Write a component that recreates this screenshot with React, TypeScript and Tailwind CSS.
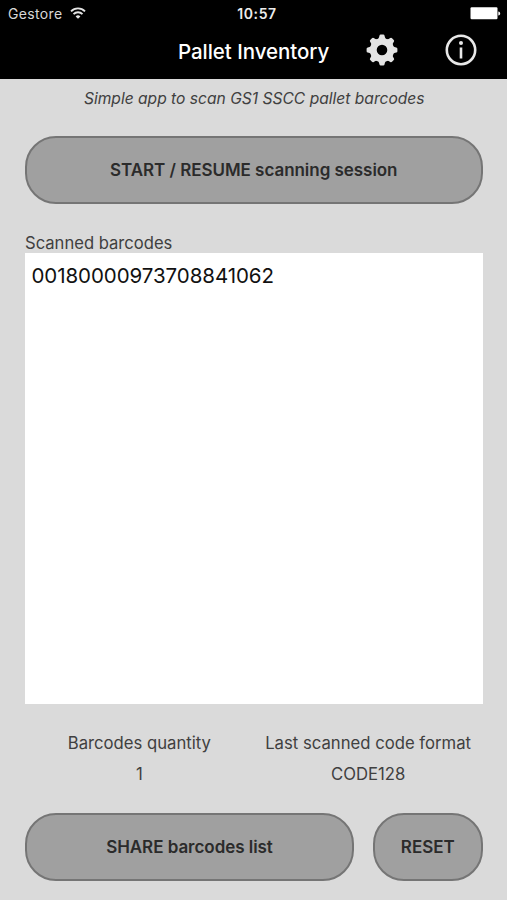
import { useState } from "react";
import type { ReactNode } from "react";

const GEAR_TEETH = [0, 45, 90, 135, 180, 225, 270, 315];

function WifiIcon() {
  return (
    <svg width="16" height="12" viewBox="0 0 16 12" fill="none" stroke="#e4e4e4" strokeWidth="1.9">
      <path d="M1 4.3a9.9 9.9 0 0 1 14 0" />
      <path d="M3.5 7.1a6.4 6.4 0 0 1 9 0" />
      <path d="M8 11.8 5.6 9.4a3.5 3.5 0 0 1 4.8 0Z" fill="#e4e4e4" stroke="none" />
    </svg>
  );
}

function BatteryIcon() {
  return (
    <svg width="31" height="13" viewBox="0 0 31 13" fill="#fff">
      <rect x="0.5" y="0.3" width="27" height="12" rx="1.2" />
      <path d="M28.3 4.4c1.4.4 1.9 1.2 1.9 2.1s-.5 1.7-1.9 2.1Z" />
    </svg>
  );
}

function GearIcon() {
  return (
    <svg width="32" height="32" viewBox="-16 -16 32 32">
      <circle r="8.7" fill="none" stroke="#e4e4e4" strokeWidth="6.8" />
      {GEAR_TEETH.map((angle) => (
        <path
          key={angle}
          d="M-4.3-10.500C-3-12-2.900-13-2.600-14.200Q-2.300-15.400-1.200-15.400H1.200Q2.300-15.400 2.600-14.200C2.900-13 3-12 4.300-10.500Z"
          transform={`rotate(${angle})`}
          fill="#e4e4e4"
        />
      ))}
    </svg>
  );
}

function InfoIcon() {
  return (
    <svg width="32" height="32" viewBox="-16 -16 32 32" fill="none" stroke="#e8e8e8">
      <circle r="14.2" strokeWidth="2.6" />
      <circle cy="-7.1" r="2" fill="#e8e8e8" stroke="none" />
      <path d="M0-2.5V8.500" strokeWidth="2.6" />
    </svg>
  );
}

function PillButton({ className, onClick, children }: { className: string; onClick?: () => void; children: ReactNode }) {
  return (
    <button
      onClick={onClick}
      className={`h-[68px] rounded-[31px] border-2 border-[#757575] bg-[#a0a0a0] pt-[2px] text-[17px] font-semibold tracking-[-0.04px] text-[#2b2b2b] ${className}`}
    >
      {children}
    </button>
  );
}

function Stat({ label, value }: { label: string; value: string | number }) {
  return (
    <div className="flex-1 text-center text-[16.7px] leading-[30px] whitespace-nowrap">
      <p>{label}</p>
      <p className="pt-px">{value}</p>
    </div>
  );
}

export default function App() {
  const [barcodes, setBarcodes] = useState(["00180000973708841062"]);

  return (
    <div className="flex h-[900px] w-[507px] flex-col overflow-hidden bg-[#dadada] font-['Inter',sans-serif] text-[#404040]">
      <header className="h-[79px] bg-black text-white">
        {/* Status bar */}
        <div className="grid h-7 grid-cols-3 items-center pr-1.5 pl-2">
          <div className="-mt-0.5 flex items-center gap-[7px] text-[14px] tracking-[0.35px] text-[#d8d8d8]">
            <span>Gestore</span>
            <span className="-mt-px">
              <WifiIcon />
            </span>
          </div>
          <span className="-mt-0.5 pl-[5px] text-center text-[14px] font-semibold tracking-[0.6px] text-[#ececec]">10:57</span>
          <div className="-mt-px flex justify-end">
            <BatteryIcon />
          </div>
        </div>

        {/* Title bar */}
        <div className="flex h-11 items-center pl-[178px]">
          <h1 className="w-[188px] pt-[5px] text-[20.5px] font-medium tracking-[-0.05px] whitespace-nowrap">Pallet Inventory</h1>
          <button className="mr-[47px]" aria-label="Settings">
            <GearIcon />
          </button>
          <button aria-label="Info">
            <InfoIcon />
          </button>
        </div>
      </header>

      <main className="flex flex-1 flex-col pr-[24.5px] pl-[25px]">
        <p className="mt-2 pl-px text-center text-[15.6px] leading-6 italic">Simple app to scan GS1 SSCC pallet barcodes</p>

        <PillButton className="mt-[25px]">START / RESUME scanning session</PillButton>

        <h2 className="mt-[29px] text-[16.6px] leading-5">Scanned barcodes</h2>
        <div className="h-[451px] bg-white px-[6.5px] pt-2 text-[20.5px] leading-[30px] tracking-[-0.07px] text-[#111]">
          {barcodes.map((code) => (
            <p key={code}>{code}</p>
          ))}
        </div>

        <div className="mt-6 flex">
          <Stat label="Barcodes quantity" value={barcodes.length} />
          <Stat label="Last scanned code format" value="CODE128" />
        </div>

        <div className="mt-[23.5px] flex gap-[19px]">
          <PillButton className="w-[329px]">SHARE barcodes list</PillButton>
          <PillButton className="flex-1" onClick={() => setBarcodes([])}>
            RESET
          </PillButton>
        </div>
      </main>
    </div>
  );
}
